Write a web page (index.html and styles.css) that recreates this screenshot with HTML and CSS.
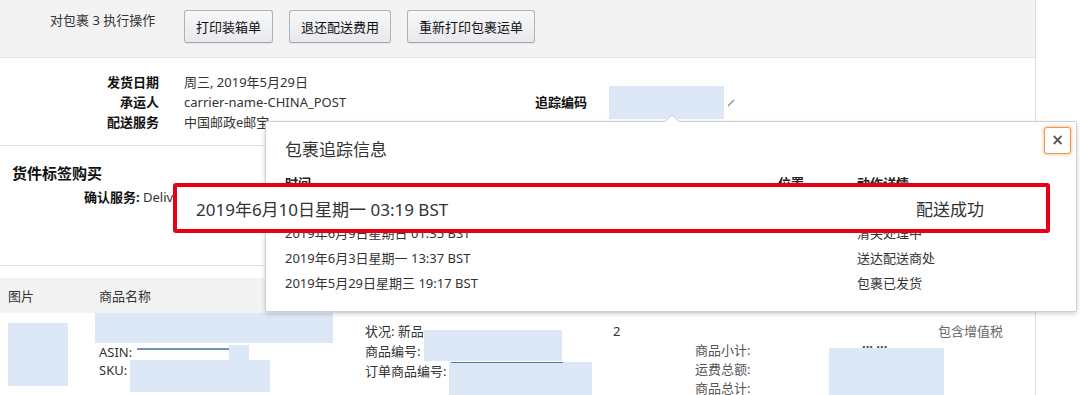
FILE: index.html
```html
<!DOCTYPE html>
<html lang="zh-CN">
<head>
<meta charset="utf-8">
<title>包裹追踪信息</title>
<link rel="stylesheet" href="styles.css">
</head>
<body>
<div class="page">
  <div class="actions">
    <span class="actions-label">对包裹 3 执行操作</span>
    <div class="btns">
      <button class="btn">打印装箱单</button>
      <button class="btn">退还配送费用</button>
      <button class="btn">重新打印包裹运单</button>
    </div>
  </div>

  <div class="ship">
    <div class="k">发货日期</div><div class="v">周三, 2019年5月29日</div>
    <div class="track">
      <span class="k">追踪编码</span>
      <span class="redact track-code"></span>
      <svg class="edit" width="8" height="8" viewBox="0 0 8 8"><path d="M1 7 L7 1" stroke="#8a8a8a" stroke-width="1.2" fill="none"/></svg>
    </div>
    <div class="k">承运人</div><div class="v">carrier-name-CHINA_POST</div>
    <div class="k">配送服务</div><div class="v">中国邮政e邮宝</div>
  </div>

  <div class="buy">
    <div class="buy-title">货件标签购买</div>
    <div class="buy-row"><span class="k">确认服务:</span> Delivery Confirmation</div>
  </div>

  <div class="items-head">
    <span class="col-img">图片</span>
    <span>商品名称</span>
  </div>

  <div class="item">
    <div><span class="redact item-img"></span></div>
    <div class="item-name">
      <div class="redact name-box"></div>
      <div class="lines">
        <div>ASIN:<span class="asin-line"></span><span class="redact asin-box"></span></div>
        <div>SKU:<span class="redact sku-box"></span></div>
      </div>
    </div>
    <div class="item-cond">
      <div>状况: 新品</div>
      <div>商品编号:<span class="redact pid-box"></span></div>
      <div>订单商品编号:<span class="redact oid-box"></span></div>
    </div>
    <div class="item-qty">2</div>
    <div class="item-sums">
      <div>商品小计:</div>
      <div>运费总额:</div>
      <div>商品总计:</div>
    </div>
    <div class="item-amt">
      <div class="amt-dots">... ...</div>
      <div class="redact amt-box"></div>
    </div>
    <div class="item-tax">包含增值税</div>
  </div>
</div>

<div class="popup">
  <span class="popup-arrow"></span>
  <button class="close">×</button>
  <h2 class="popup-title">包裹追踪信息</h2>
  <div class="trk">
    <div class="trk-row trk-head"><span>时间</span><span>位置</span><span>动作详情</span></div>
    <div class="trk-row trk-covered"><span>2019年6月10日星期一 03:19 BST</span><span></span><span>配送成功</span></div>
    <div class="trk-row"><span>2019年6月9日星期日 01:35 BST</span><span></span><span>清关处理中</span></div>
    <div class="trk-row"><span>2019年6月3日星期一 13:37 BST</span><span></span><span>送达配送商处</span></div>
    <div class="trk-row"><span>2019年5月29日星期三 19:17 BST</span><span></span><span>包裹已发货</span></div>
  </div>
</div>

<div class="callout">
  <span>2019年6月10日星期一 03:19 BST</span>
  <span>配送成功</span>
</div>
</body>
</html>
```

FILE: styles.css
```css
* { box-sizing: border-box; }
html { overflow: hidden; }
body {
  margin: 0;
  width: 1080px;
  height: 395px;
  position: relative;
  font-family: "Noto Sans", "Noto Sans CJK SC", sans-serif;
  font-size: 13px;
  color: #333;
  background: #fff;
}

.page {
  width: 1036px;
  min-height: 395px;
  border-right: 1px solid #dedede;
}

/* action band */
.actions {
  height: 58px;
  background: #f3f3f3;
  border-bottom: 1px solid #e2e2e2;
  display: flex;
  align-items: flex-start;
  padding: 10px 0 0 50px;
}
.actions-label {
  width: 134px;
  line-height: 16px;
  margin-top: 2px;
  color: #333;
}
.btns { display: flex; gap: 16px; }
.btn {
  height: 33px;
  padding: 0 11px;
  font: inherit;
  color: #111;
  background: linear-gradient(#f7f8fa, #e7e9ec);
  border: 1px solid #adb1b8;
  border-bottom-color: #a2a6ac;
  border-radius: 3px;
  box-shadow: inset 0 1px 0 rgba(255,255,255,.6), 0 1px 0 rgba(0,0,0,.05);
}

.k { font-weight: bold; color: #111; }

/* shipment info */
.ship {
  display: grid;
  grid-template-columns: 159px 326px 1fr;
  column-gap: 25px;
  padding: 14px 0 13px;
  border-bottom: 1px solid #e2e2e2;
  line-height: 20px;
}
.ship > .k { grid-column: 1; text-align: right; }
.ship > .v { grid-column: 2; white-space: nowrap; }
.track {
  grid-column: 3;
  grid-row: 1 / span 3;
  align-self: center;
  display: flex;
  align-items: center;
}
.track .k { margin-right: 22px; }

.redact { display: inline-block; background: #dce8f6; }
.track-code { width: 115px; height: 33px; }
.edit { margin-left: 3px; margin-top: 2px; }

/* label purchase */
.buy {
  height: 120px;
  padding: 17px 0 0 12px;
  border-bottom: 1px solid #e2e2e2;
}
.buy-title { font-size: 15px; font-weight: bold; line-height: 20px; color: #111; }
.buy-row {
  width: 161px;
  overflow: hidden;
  margin-top: 4px;
  padding-left: 72px;
  line-height: 20px;
  white-space: nowrap;
}

/* items table */
.items-head {
  margin-top: 12px;
  height: 35px;
  background: #f3f3f3;
  display: flex;
  padding: 2px 0 0 8px;
  line-height: 33px;
  color: #333;
}
.col-img { width: 91px; }

.item {
  display: grid;
  grid-template-columns: 87px 270px 248px 82px 134px 109px 1fr;
  padding-left: 8px;
  line-height: 20px;
}
.item-img { width: 60px; height: 63px; margin-top: 10px; }
.name-box { display: block; width: 238px; height: 30px; }
.item-name .lines { padding-left: 4px; line-height: 18px; }
.asin-line {
  display: inline-block;
  width: 92px;
  height: 12px;
  margin-left: 5px;
  border-top: 2px solid #7290b5;
  vertical-align: middle;
}
.asin-box { width: 20px; height: 16px; vertical-align: bottom; }
.sku-box { width: 140px; height: 32px; margin-left: 3px; margin-top: -1px; vertical-align: top; }

.item-cond { padding-top: 8px; white-space: nowrap; }
.pid-box {
  width: 138px;
  height: 31px;
  margin-left: 4px;
  margin-top: -11px;
  vertical-align: bottom;
}
.oid-box {
  width: 143px;
  height: 33px;
  margin-left: 3px;
  margin-top: 1px;
  vertical-align: top;
  background: linear-gradient(#4f72a0, #4f72a0) 2px 0 / 112px 1px no-repeat, #dce8f6;
}
.item-qty { padding-top: 8px; }
.item-sums { padding-top: 28px; line-height: 19px; color: #555; }
.item-amt { padding-top: 25px; }
.amt-dots { padding-left: 33px; line-height: 10px; height: 10px; font-weight: bold; color: #444; }
.amt-box { display: block; width: 115px; height: 47px; }
.item-tax { padding-top: 8px; color: #666; }

/* tracking popover */
.popup {
  position: absolute;
  left: 265px;
  top: 121px;
  width: 812px;
  height: 191px;
  background: #fff;
  border: 1px solid #cfcfcf;
  border-radius: 2px;
  box-shadow: 0 2px 5px rgba(0,0,0,.18);
  padding-left: 19px;
}
.popup-arrow {
  position: absolute;
  left: 401px;
  top: -6px;
  width: 10px;
  height: 10px;
  background: #fff;
  border-left: 1px solid #cfcfcf;
  border-top: 1px solid #cfcfcf;
  transform: rotate(45deg);
}
.close {
  position: absolute;
  right: 5px;
  top: 5px;
  width: 27px;
  height: 27px;
  padding: 0;
  background: #fff;
  border: 1px solid #e59a52;
  border-radius: 3px;
  box-shadow: 0 0 3px 1px rgba(240,160,80,.55);
  font: bold 15px/25px "DejaVu Sans", sans-serif;
  color: #555;
}
.popup-title {
  margin: 0;
  padding-top: 16px;
  font-size: 17px;
  font-weight: normal;
  line-height: 24px;
  color: #333;
}
.trk { margin-top: 9px; }
.trk-row {
  display: grid;
  grid-template-columns: 493px 79px 1fr;
  height: 25px;
  line-height: 25px;
  white-space: nowrap;
}
.trk-head { font-weight: bold; color: #222; }
.trk-covered { visibility: hidden; }

/* annotation callout */
.callout {
  position: absolute;
  left: 173px;
  top: 183px;
  width: 877px;
  height: 50px;
  border: 4px solid #e60012;
  border-radius: 3px;
  background: #fff;
  display: grid;
  grid-template-columns: 720px 1fr;
  align-items: center;
  padding-left: 19px;
  font-size: 17px;
  color: #333;
  white-space: nowrap;
}
```
